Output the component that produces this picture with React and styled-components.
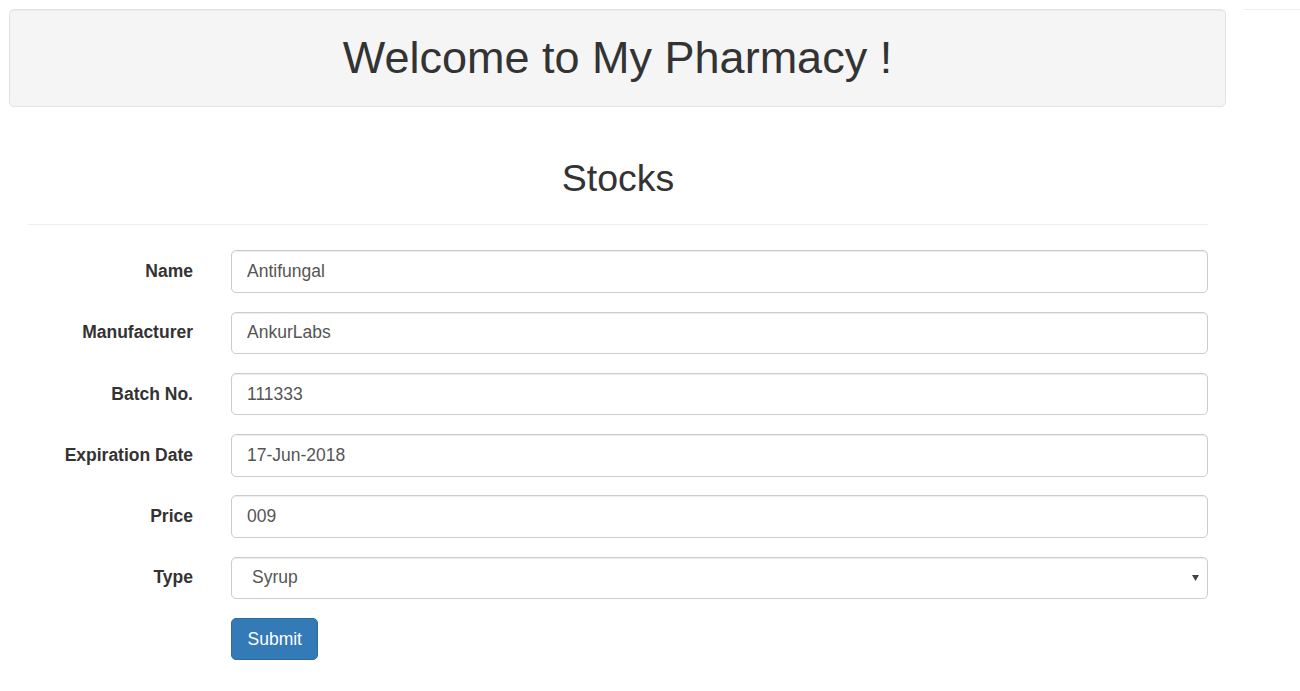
import React from 'react'
import styled, { createGlobalStyle } from 'styled-components'

const GlobalStyle = createGlobalStyle`
    * {
        box-sizing: border-box;
    }

    body {
        margin: 0;
        background: white;
        color: #333;
        font-family: "Liberation Sans", Arial, sans-serif;
        font-size: 17.5px;
        line-height: 1.42857;
    }
`

const fields = [
    { label: 'Name', value: 'Antifungal' },
    { label: 'Manufacturer', value: 'AnkurLabs' },
    { label: 'Batch No.', value: '111333' },
    { label: 'Expiration Date', value: '17-Jun-2018' },
    { label: 'Price', value: '009' }
]

const Page = styled.div`
    padding: 9px 0 0 9px;
    overflow: hidden;
`

const HeaderRow = styled.div`
    display: flex;
    align-items: flex-start;
    gap: 17px;
`

const Well = styled.div`
    flex: 0 0 1217px;
    height: 98px;
    display: flex;
    align-items: center;
    justify-content: center;
    background: #f5f5f5;
    border: 1px solid #e3e3e3;
    border-radius: 5px;
    box-shadow: inset 0 1px 1px rgba(0, 0, 0, 0.05);
`

const SideEdge = styled.div`
    flex: 1;
    border-top: 1px solid #f0f0f0;
`

const Headline = styled.h1`
    margin: 0;
    font-size: 45px;
    font-weight: 400;
    line-height: 1.1;
    color: #333;
`

const Section = styled.section`
    width: 1180px;
    margin-left: 19px;
`

const Title = styled.h2`
    margin: 51px 0 0;
    text-align: center;
    font-size: 37.5px;
    font-weight: 400;
    line-height: 1.1;
    color: #333;
`

const Divider = styled.hr`
    margin: 25px 0 25px;
    border: 0;
    border-top: 1px solid #eee;
`

const Form = styled.form`
    display: flex;
    flex-direction: column;
    gap: 18.75px;
`

const Row = styled.div`
    display: grid;
    grid-template-columns: 165px 977px;
    column-gap: 38px;
    align-items: center;
`

const Label = styled.label`
    text-align: right;
    font-weight: 700;
    color: #333;
`

const Input = styled.input`
    width: 100%;
    height: 42.5px;
    padding: 7.5px 15px;
    font: inherit;
    color: #555;
    background: white;
    border: 1px solid #ccc;
    border-radius: 5px;
    box-shadow: inset 0 1px 1px rgba(0, 0, 0, 0.075);
    outline: none;
`

const SelectBox = styled.div`
    position: relative;
`

const Select = styled.select`
    width: 100%;
    height: 42.5px;
    padding: 7.5px 15px 7.5px 20px;
    font: inherit;
    color: #555;
    background: white;
    border: 1px solid #ccc;
    border-radius: 5px;
    box-shadow: inset 0 1px 1px rgba(0, 0, 0, 0.075);
    appearance: none;
    outline: none;
`

const Caret = styled.svg`
    position: absolute;
    right: 9px;
    top: 18px;
    pointer-events: none;
`

const Button = styled.button`
    height: 42.5px;
    padding: 7.5px 15.5px;
    font: inherit;
    color: white;
    background: #337ab7;
    border: 1px solid #2e6da4;
    border-radius: 5px;
    cursor: pointer;
`

const App = () => {
    return (
        <Page>
            <GlobalStyle />
            <HeaderRow>
                <Well>
                    <Headline>Welcome to My Pharmacy !</Headline>
                </Well>
                <SideEdge />
            </HeaderRow>
            <Section>
                <Title>Stocks</Title>
                <Divider />
                <Form onSubmit={e => e.preventDefault()}>
                    {fields.map(field => (
                        <Row key={field.label}>
                            <Label>{field.label}</Label>
                            <Input defaultValue={field.value} />
                        </Row>
                    ))}
                    <Row>
                        <Label>Type</Label>
                        <SelectBox>
                            <Select defaultValue='Syrup'>
                                <option>Syrup</option>
                                <option>Tablet</option>
                                <option>Capsule</option>
                            </Select>
                            <Caret width='7' height='6' viewBox='0 0 7 6'>
                                <path d='M0 0 H7 L3.5 6 Z' fill='#444' />
                            </Caret>
                        </SelectBox>
                    </Row>
                    <Row>
                        <span />
                        <div>
                            <Button type='submit'>Submit</Button>
                        </div>
                    </Row>
                </Form>
            </Section>
        </Page>
    )
}

export default App
